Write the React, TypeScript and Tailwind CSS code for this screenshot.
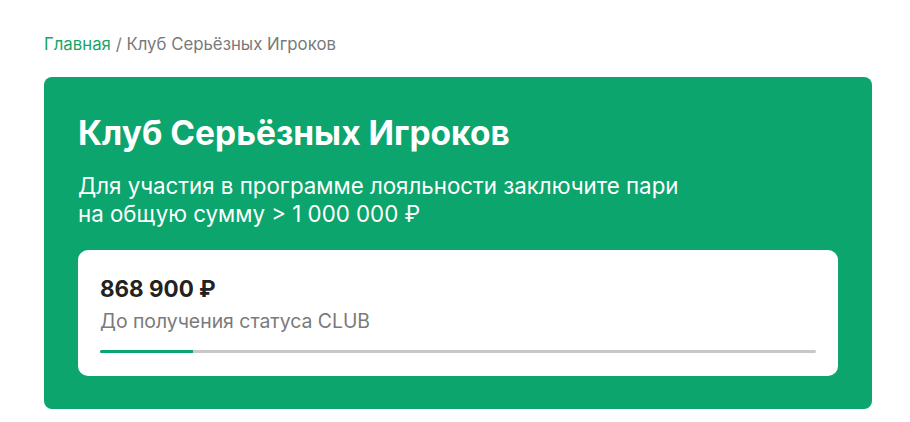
import React from "react";

export default function App() {
  return (
    <div className="w-[910px] h-[422px] bg-white" style={{ fontFamily: "Inter, 'Noto Sans', sans-serif" }}>
      <div className="px-[44px] pt-[33px]">
        <div className="text-[16.8px] leading-[22px] text-[#7a7a7a]">
          <span className="text-[#19a468]">Главная</span> / Клуб Серьёзных Игроков
        </div>
        <div className="mt-[22px] w-[828px] rounded-[8px] bg-[#0ba56d] px-[34px] pt-[36px] pb-[33px]">
          <h1 className="text-[33.5px] leading-[40px] font-bold text-white">Клуб Серьёзных Игроков</h1>
          <p className="mt-[19px] text-[22.3px] leading-[28px] text-white">
            Для участия в программе лояльности заключите пари
            <br />
            на общую сумму &gt; 1 000 000 ₽
          </p>
          <div className="mt-[22px] rounded-[10px] bg-white px-[22px] pt-[25px] pb-[23px]">
            <div className="text-[22.4px] leading-[28px] font-bold text-[#222]">868 900 ₽</div>
            <div className="mt-[6px] text-[19.4px] leading-[24px] text-[#7a7a7a]">До получения статуса CLUB</div>
            <div className="mt-[17px] h-[3px] w-full bg-[#c8c8c8] rounded-full overflow-hidden">
              <div className="h-full bg-[#0ba56d]" style={{ width: "13%" }} />
            </div>
          </div>
        </div>
      </div>
    </div>
  );
}
